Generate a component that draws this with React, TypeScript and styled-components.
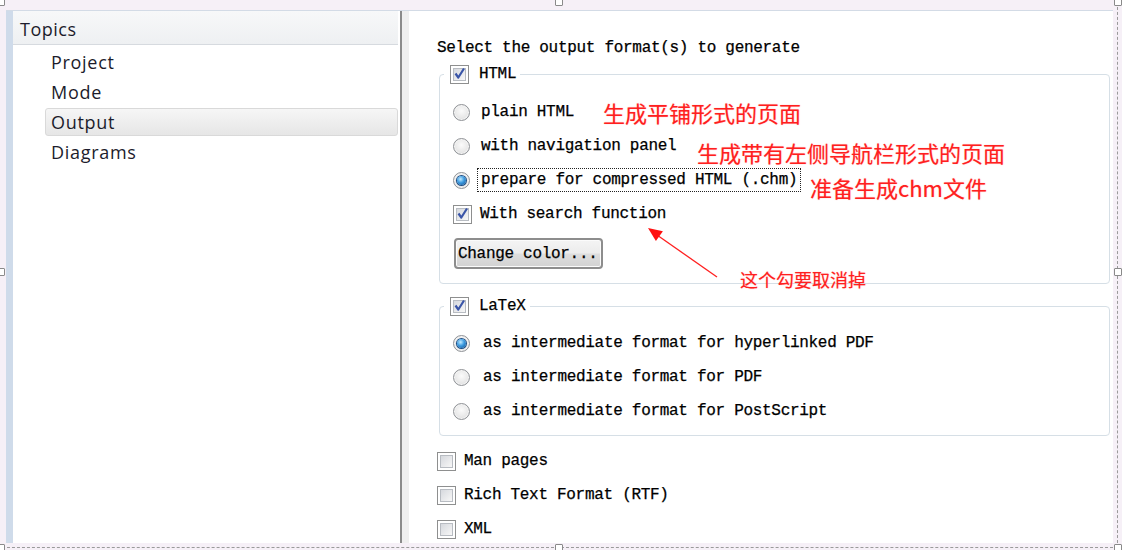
import React from "react";
import styled, { createGlobalStyle, css } from "styled-components";

const Global = createGlobalStyle`
  html, body { margin: 0; padding: 0; background: #f6f0f7; }
  #root { width: 1122px; height: 550px; }
`;

const MONO = `"Liberation Mono", "DejaVu Sans Mono", monospace`;
const UI = `"Open Sans", "Noto Sans", sans-serif`;
const CJK = `"Noto Sans CJK SC", "Noto Sans", sans-serif`;

const Frame = styled.div`
  position: relative;
  width: 1122px;
  height: 550px;
  box-sizing: border-box;
  padding: 10px 9px 7px 6px;
  background: #f6f0f7;
  display: flex;
  overflow: hidden;
`;

const Window = styled.div`
  flex: 1;
  display: flex;
  border-top: 1px solid #d3dbe6;
  background: #fff;
`;

const LeftPane = styled.div`
  width: 387px;
  border-left: 7px solid #cfdbea;
  display: flex;
  flex-direction: column;
  background: #fff;
`;

const TreeHeader = styled.div`
  height: 34px;
  box-sizing: border-box;
  display: flex;
  align-items: center;
  padding: 3px 0 0 7px;
  margin-right: 2px;
  background: linear-gradient(#f7f8f9, #eef0f2);
  border-bottom: 1px solid #d6dadf;
  font-family: ${UI};
  font-size: 18px;
  letter-spacing: 0.5px;
  color: #1c1c2c;
`;

const TreeList = styled.div`
  display: flex;
  flex-direction: column;
  gap: 2px;
  padding: 3px 2px 0 32px;
`;

const TreeItem = styled.div<{ $selected?: boolean }>`
  height: 28px;
  box-sizing: border-box;
  display: flex;
  align-items: center;
  padding-left: 5px;
  border: 1px solid transparent;
  border-radius: 3px;
  font-family: ${UI};
  font-size: 18px;
  letter-spacing: 0.7px;
  color: #1c1c2c;
  ${(p) =>
    p.$selected &&
    css`
      background: linear-gradient(#f6f6f6, #e6e6e6);
      border-color: #d9d9d9;
    `}
`;

const Splitter = styled.div`
  width: 7px;
  border-left: 2px solid #8b8b8b;
  background: #efefef;
`;

const RightPane = styled.div`
  flex: 1;
  display: flex;
  flex-direction: column;
  padding: 28px 3px 0 28px;
  background: #fff;
  font-family: ${MONO};
  font-size: 16px;
  letter-spacing: -0.3px;
  color: #000;
`;

const Title = styled.div`
  height: 18px;
  line-height: 18px;
  -webkit-text-stroke: 0.25px #000;
`;

const Group = styled.fieldset<{ $top: number }>`
  margin: ${(p) => p.$top}px 0 0 2px;
  padding: 0;
  border: 1px solid #d6dfe6;
  border-radius: 4px;
  min-width: 0;
`;

const Legend = styled.legend`
  margin-left: 4px;
  padding: 0 4px 0 6px;
  height: 20px;
  display: flex;
  align-items: center;
  gap: 10px;
  line-height: 20px;
`;

const GroupBody = styled.div<{ $pt: number }>`
  display: flex;
  flex-direction: column;
  align-items: flex-start;
  gap: 14px;
  padding: ${(p) => p.$pt}px 0 14px 13px;
`;

const Row = styled.div<{ $gap?: number }>`
  height: 20px;
  display: flex;
  align-items: center;
  gap: ${(p) => p.$gap ?? 8}px;
`;

const Label = styled.span<{ $focused?: boolean }>`
  line-height: 18px;
  padding: 2px 3px;
  border: 1px dotted transparent;
  white-space: nowrap;
  -webkit-text-stroke: 0.25px #000;
  ${(p) => p.$focused && css`border-color: #222;`}
`;

const Text = styled.span`
  line-height: 18px;
  white-space: nowrap;
  -webkit-text-stroke: 0.25px #000;
`;

const BoxOuter = styled.span`
  width: 19px;
  height: 19px;
  box-sizing: border-box;
  flex: none;
  border: 1px solid #8e8f8f;
  background: #fff;
  padding: 2px;
  display: flex;
`;

const BoxInner = styled.span`
  flex: 1;
  position: relative;
  border: 1px solid #b8bcc2;
  background: linear-gradient(135deg, #d6d9de, #f7f7f7);
`;

const CheckMark = styled.svg`
  position: absolute;
  left: -2px;
  top: -3px;
`;

const Checkbox = ({ checked }: { checked?: boolean }) => (
  <BoxOuter>
    <BoxInner>
      {checked && (
        <CheckMark width="15" height="15" viewBox="0 0 15 15">
          <path d="M3.5 7.5 L6.3 11.5 L12 2.5" fill="none" stroke="#3a55a8" strokeWidth="2.2" strokeLinejoin="round" />
        </CheckMark>
      )}
    </BoxInner>
  </BoxOuter>
);

const RadioOuter = styled.span`
  width: 17px;
  height: 17px;
  box-sizing: border-box;
  flex: none;
  border-radius: 50%;
  border: 1px solid #8f9296;
  background: radial-gradient(circle at 50% 40%, #fbfbfb 0%, #e9e9e9 55%, #cfd1d4 100%);
  display: flex;
  align-items: center;
  justify-content: center;
  box-shadow: inset 0 0 0 1px #f4f4f4;
`;

const RadioDot = styled.span`
  width: 9px;
  height: 9px;
  border-radius: 50%;
  background: radial-gradient(circle at 40% 35%, #c4ecff 0%, #3b9ae0 45%, #104f90 100%);
  box-shadow: 0 0 0 1px #1d4f86;
`;

const Radio = ({ checked }: { checked?: boolean }) => (
  <RadioOuter>{checked && <RadioDot />}</RadioOuter>
);

const Button = styled.button`
  margin-left: 1px;
  width: 149px;
  height: 31px;
  box-sizing: border-box;
  padding: 0 0 0 2px;
  text-align: left;
  border: 2px solid #8d8d8d;
  border-radius: 4px;
  background: linear-gradient(#f4f4f4 0%, #ececec 48%, #dedede 52%, #d2d2d2 100%);
  box-shadow: inset 0 0 0 1px #fbfbfb;
  font-family: ${MONO};
  font-size: 16px;
  letter-spacing: -0.3px;
  color: #000;
  -webkit-text-stroke: 0.25px #000;
`;

const Standalone = styled.div`
  display: flex;
  flex-direction: column;
  gap: 14px;
  margin-top: 15px;
`;

const Note = styled.div<{ $left: number; $top: number; $size: number }>`
  position: absolute;
  left: ${(p) => p.$left}px;
  top: ${(p) => p.$top}px;
  font-family: ${CJK};
  font-size: ${(p) => p.$size}px;
  line-height: ${(p) => p.$size}px;
  color: #ff1f1f;
  white-space: nowrap;
  text-shadow: 0 0 1px rgba(255, 80, 80, 0.6);
`;

const Arrow = styled.svg`
  position: absolute;
  left: 640px;
  top: 222px;
`;

const Selection = styled.div`
  position: absolute;
  left: 2px;
  top: 2px;
  width: 1116px;
  height: 546px;
  box-sizing: border-box;
  border-right: 1px dashed #9a9a9a;
  border-bottom: 1px dashed #9a9a9a;
  pointer-events: none;
`;

const Handle = styled.div<{ $left: number; $top: number }>`
  position: absolute;
  left: ${(p) => p.$left}px;
  top: ${(p) => p.$top}px;
  width: 6px;
  height: 6px;
  background: #fff;
  border: 1px solid #8a8a8a;
  border-radius: 1px;
`;

export default function App() {
  return (
    <>
      <Global />
      <Frame>
        <Window>
          <LeftPane>
            <TreeHeader>Topics</TreeHeader>
            <TreeList>
              <TreeItem>Project</TreeItem>
              <TreeItem>Mode</TreeItem>
              <TreeItem $selected>Output</TreeItem>
              <TreeItem>Diagrams</TreeItem>
            </TreeList>
          </LeftPane>
          <Splitter />
          <RightPane>
            <Title>Select the output format(s) to generate</Title>

            <Group $top={7}>
              <Legend>
                <Checkbox checked />
                <Text>HTML</Text>
              </Legend>
              <GroupBody $pt={18}>
                <Row $gap={7}>
                  <Radio />
                  <Label>plain HTML</Label>
                </Row>
                <Row $gap={7}>
                  <Radio />
                  <Label>with navigation panel</Label>
                </Row>
                <Row $gap={7}>
                  <Radio checked />
                  <Label $focused>prepare for compressed HTML (.chm)</Label>
                </Row>
                <Row $gap={8}>
                  <Checkbox checked />
                  <Text>With search function</Text>
                </Row>
                <Button>Change color...</Button>
              </GroupBody>
            </Group>

            <Group $top={12}>
              <Legend>
                <Checkbox checked />
                <Text>LaTeX</Text>
              </Legend>
              <GroupBody $pt={17}>
                <Row $gap={9}>
                  <Radio checked />
                  <Label>as intermediate format for hyperlinked PDF</Label>
                </Row>
                <Row $gap={9}>
                  <Radio />
                  <Label>as intermediate format for PDF</Label>
                </Row>
                <Row $gap={9}>
                  <Radio />
                  <Label>as intermediate format for PostScript</Label>
                </Row>
              </GroupBody>
            </Group>

            <Standalone>
              <Row>
                <Checkbox />
                <Text>Man pages</Text>
              </Row>
              <Row>
                <Checkbox />
                <Text>Rich Text Format (RTF)</Text>
              </Row>
              <Row>
                <Checkbox />
                <Text>XML</Text>
              </Row>
            </Standalone>
          </RightPane>
        </Window>

        <Note $left={603} $top={101} $size={22}>生成平铺形式的页面</Note>
        <Note $left={697} $top={141} $size={22}>生成带有左侧导航栏形式的页面</Note>
        <Note $left={810} $top={176} $size={22}>准备生成chm文件</Note>
        <Note $left={740} $top={270} $size={18}>这个勾要取消掉</Note>
        <Arrow width="85" height="62" viewBox="0 0 85 62">
          <line x1="77" y1="55" x2="17" y2="13" stroke="#ff2020" strokeWidth="1.3" />
          <polygon points="8,6 22.9,9.2 15.9,19" fill="#ff1010" />
        </Arrow>

        <Selection />
        <Handle $left={555} $top={-2} />
        <Handle $left={-3} $top={268} />
        <Handle $left={1114} $top={268} />
        <Handle $left={555} $top={544} />
        <Handle $left={-3} $top={544} />
        <Handle $left={1114} $top={544} />
        <Handle $left={1114} $top={-2} />
        <Handle $left={-3} $top={-2} />
      </Frame>
    </>
  );
}
